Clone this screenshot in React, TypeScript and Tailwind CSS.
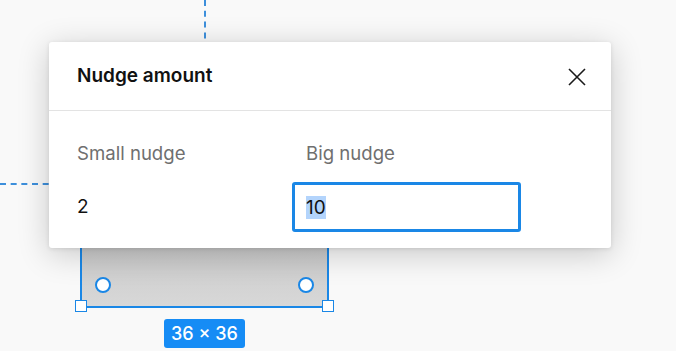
import React from "react";

export default function App() {
  return (
    <div
      className="relative w-[676px] h-[351px] overflow-hidden bg-[#f9f9f9]"
      style={{ fontFamily: "Inter, 'Noto Sans', sans-serif" }}
    >
      {/* canvas: dashed guides */}
      <div className="absolute left-[204px] top-0 h-[60px] w-0 border-l-2 border-dashed border-[#3d8fdb]" />
      <div className="absolute left-0 top-[183px] w-[70px] h-0 border-t-2 border-dashed border-[#3d8fdb]" />

      {/* selected shape */}
      <div className="absolute left-[80px] top-[220px] w-[249px] h-[88px] border-2 border-[#1a87e6] bg-gradient-to-b from-[#c4c4c4] to-[#d8d8d8]" />
      <div className="absolute left-[95px] top-[277px] w-[16px] h-[16px] rounded-full border-2 border-[#1a87e6] bg-white" />
      <div className="absolute left-[298px] top-[277px] w-[16px] h-[16px] rounded-full border-2 border-[#1a87e6] bg-white" />
      <div className="absolute left-[75px] top-[300px] w-[12px] h-[12px] border-[1.5px] border-[#1a87e6] bg-white" />
      <div className="absolute left-[322px] top-[300px] w-[12px] h-[12px] border-[1.5px] border-[#1a87e6] bg-white" />
      <div className="absolute left-[164px] top-[319px] w-[81px] h-[29px] rounded-[3px] bg-[#168cf5] flex items-center justify-center text-white text-[18px] font-medium leading-none">
        36 × 36
      </div>

      {/* dialog */}
      <div className="absolute left-[49px] top-[42px] w-[562px] h-[206px] bg-white rounded-[3px] shadow-[0_6px_32px_rgba(0,0,0,0.2),0_1px_4px_rgba(0,0,0,0.1)] flex flex-col">
        <div className="h-[69px] flex items-center justify-between pl-[28px] pr-[25px] border-b border-[#e3e3e3] shrink-0">
          <span className="text-[19px] leading-[24px] font-semibold text-[#111]">Nudge amount</span>
          <svg width="18" height="18" viewBox="0 0 18 18" className="mt-[1px]">
            <path d="M1 1L17 17M17 1L1 17" stroke="#1a1a1a" strokeWidth="1.6" fill="none" />
          </svg>
        </div>
        <div className="flex pl-[28px] pt-[30px]">
          <div className="w-[215px] flex flex-col">
            <span className="text-[18.6px] leading-[24px] text-[#6f6f6f]">Small nudge</span>
            <div className="mt-[17px] h-[50px] flex items-center text-[19px] leading-[24px] text-[#111]">2</div>
          </div>
          <div className="flex flex-col">
            <span className="pl-[14px] text-[18.6px] leading-[24px] text-[#6f6f6f]">Big nudge</span>
            <div className="mt-[17px] w-[229px] h-[50px] border-[3px] border-[#1a87e6] rounded-[3px] flex items-center pl-[11px]">
              <span className="bg-[#b3d4fc] text-[19px] leading-[23px] text-[#111]">10</span>
            </div>
          </div>
        </div>
      </div>
    </div>
  );
}
